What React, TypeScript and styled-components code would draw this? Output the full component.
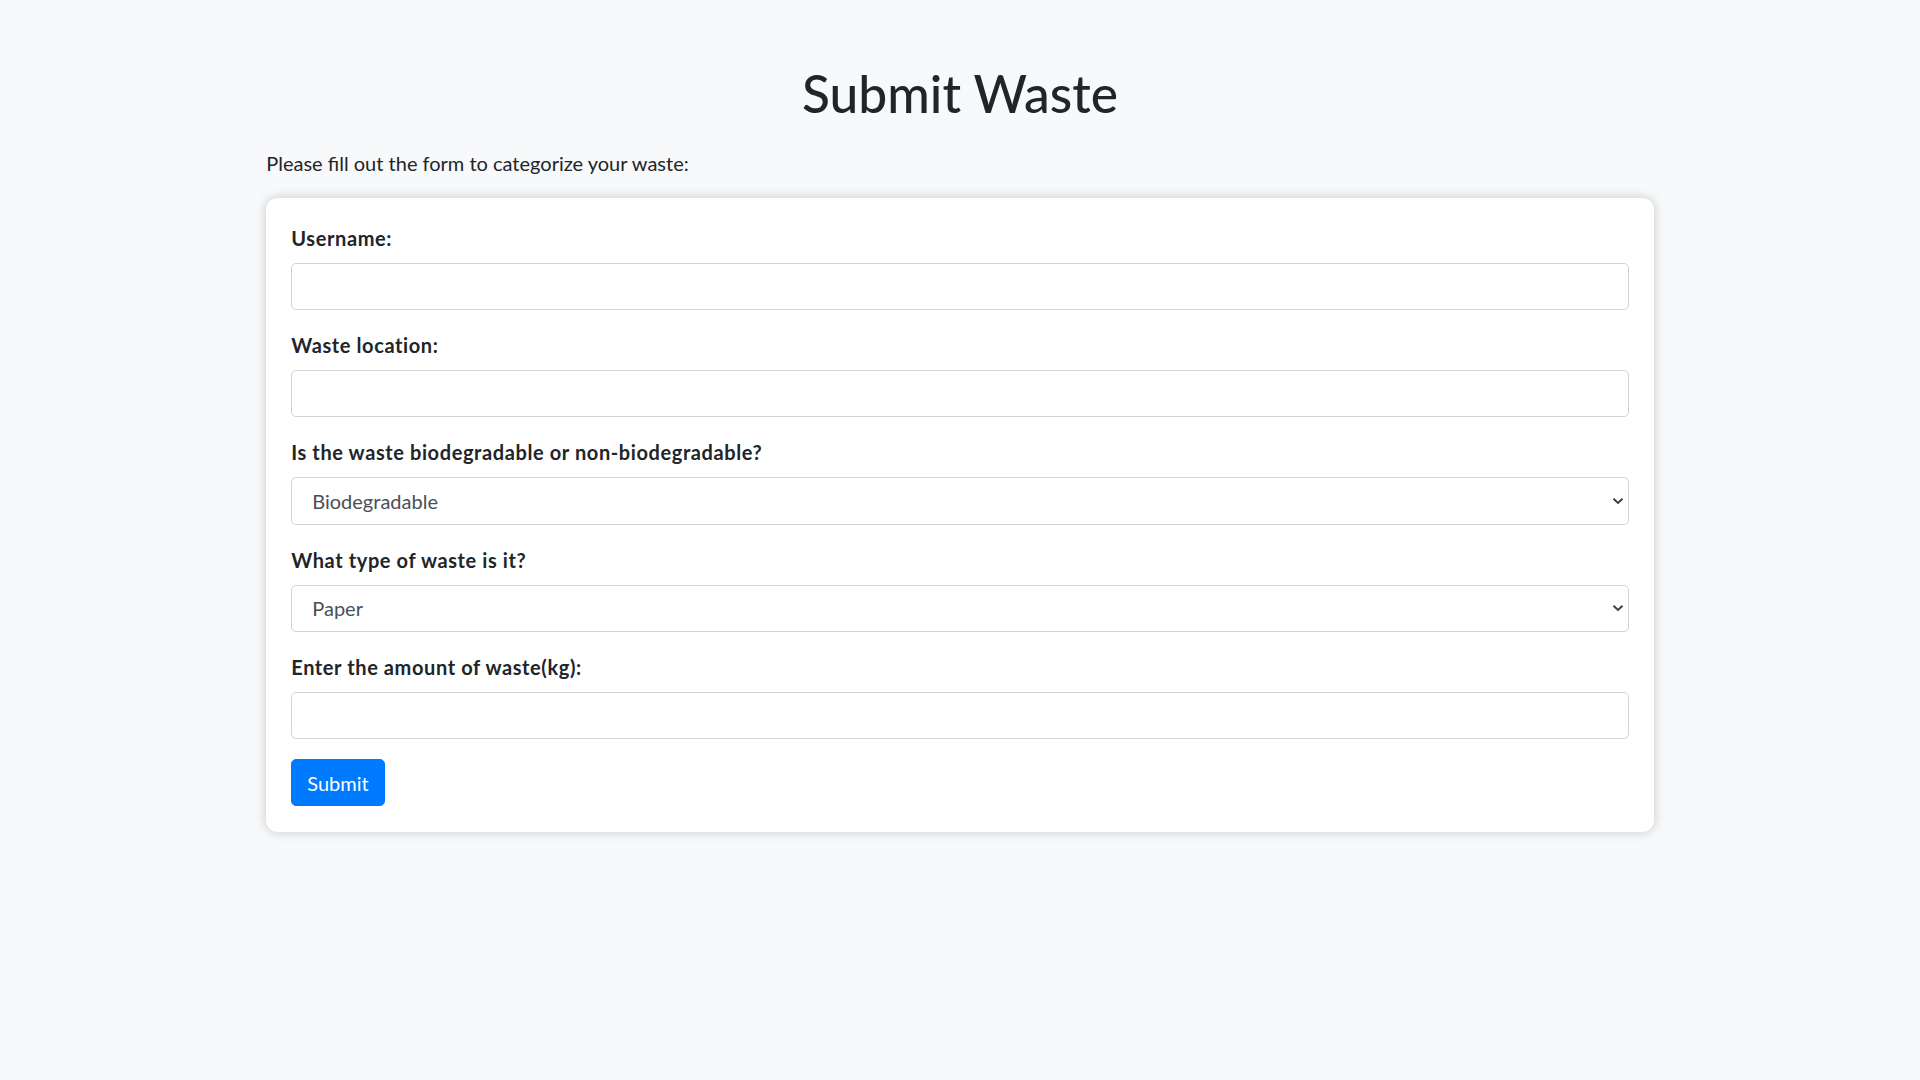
import React from "react";
import styled, { createGlobalStyle } from "styled-components";

const GlobalStyle = createGlobalStyle`
  html, body {
    margin: 0;
    padding: 0;
    background: #f8f9fa;
  }
  body {
    font-family: "Segoe UI", Lato, "Noto Sans", "Liberation Sans", sans-serif;
    color: #212529;
    font-size: 20px;
    line-height: 1.5;
  }
  *, *::before, *::after { box-sizing: border-box; }
`;

const Container = styled.div`
  max-width: 1425px;
  margin: 0 auto;
  padding: 63px 18.75px 40px;
`;

const Title = styled.h1`
  font-size: 51.5px;
  font-weight: 500;
  line-height: 1.2;
  text-align: center;
  margin: 0 0 23px;
`;

const Intro = styled.p`
  margin: 0 0 20px;
  font-size: 20px;
  line-height: 1.5;
`;

const Card = styled.form`
  background: #ffffff;
  border-radius: 12px;
  box-shadow: 0 0 12px rgba(0, 0, 0, 0.2);
  padding: 25px 25px 26px;
`;

const Field = styled.div`
  margin-bottom: 20px;
`;

const Label = styled.label`
  display: block;
  font-weight: 700;
  font-size: 20px;
  line-height: 1.5;
  letter-spacing: 0.6px;
  margin-bottom: 10px;
`;

const controlStyles = `
  display: block;
  width: 100%;
  height: 47.3px;
  padding: 7px 15px;
  font-family: inherit;
  font-size: 20px;
  line-height: 1.5;
  color: #495057;
  background: #ffffff;
  border: 1px solid #ced4da;
  border-radius: 5px;
  outline: none;
`;

const Input = styled.input`
  ${controlStyles}
`;

const SelectWrap = styled.div`
  position: relative;
`;

const Select = styled.select`
  ${controlStyles}
  appearance: none;
  -webkit-appearance: none;
  padding-left: 20px;
  padding-right: 40px;
`;

const Chevron = styled.svg`
  position: absolute;
  right: 5px;
  top: 50%;
  width: 12px;
  height: 8px;
  margin-top: -4px;
  pointer-events: none;
`;

const SubmitButton = styled.button`
  font-family: inherit;
  font-size: 20px;
  line-height: 1.5;
  color: #ffffff;
  background: #007bff;
  border: 1px solid #007bff;
  border-radius: 5px;
  padding: 7.5px 15px;
  cursor: pointer;
`;

const ChevronIcon = () => (
  <Chevron viewBox="0 0 12 8" aria-hidden="true">
    <path d="M1.5 1.8 L6 6 L10.5 1.8" fill="none" stroke="#3c4043" strokeWidth="2" />
  </Chevron>
);

export default function App() {
  return (
    <>
      <GlobalStyle />
      <Container>
        <Title>Submit Waste</Title>
        <Intro>Please fill out the form to categorize your waste:</Intro>
        <Card onSubmit={(e) => e.preventDefault()}>
          <Field>
            <Label htmlFor="username">Username:</Label>
            <Input id="username" type="text" />
          </Field>
          <Field>
            <Label htmlFor="location">Waste location:</Label>
            <Input id="location" type="text" />
          </Field>
          <Field>
            <Label htmlFor="bio">Is the waste biodegradable or non-biodegradable?</Label>
            <SelectWrap>
              <Select id="bio" defaultValue="Biodegradable">
                <option>Biodegradable</option>
                <option>Non-biodegradable</option>
              </Select>
              <ChevronIcon />
            </SelectWrap>
          </Field>
          <Field>
            <Label htmlFor="type">What type of waste is it?</Label>
            <SelectWrap>
              <Select id="type" defaultValue="Paper">
                <option>Paper</option>
                <option>Plastic</option>
                <option>Glass</option>
                <option>Metal</option>
                <option>Organic</option>
              </Select>
              <ChevronIcon />
            </SelectWrap>
          </Field>
          <Field>
            <Label htmlFor="amount">Enter the amount of waste(kg):</Label>
            <Input id="amount" type="number" />
          </Field>
          <SubmitButton type="submit">Submit</SubmitButton>
        </Card>
      </Container>
    </>
  );
}
